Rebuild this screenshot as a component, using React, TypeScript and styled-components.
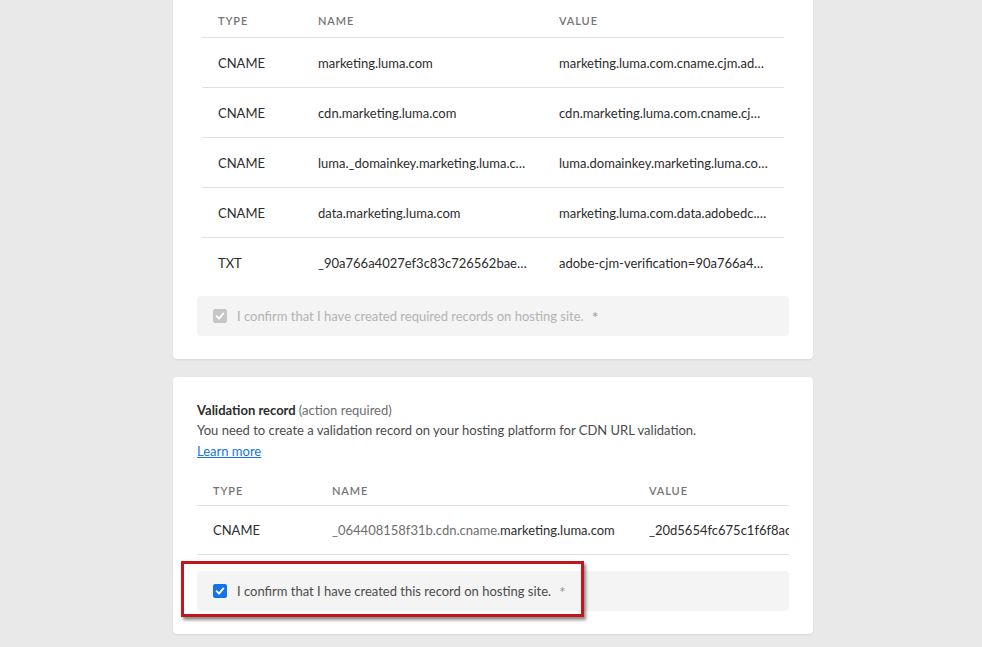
import React from "react";
import styled, { createGlobalStyle } from "styled-components";

const Global = createGlobalStyle`
  html, body { margin: 0; padding: 0; background: #e9e9e9; }
  body { font-family: Lato, "Open Sans", sans-serif; color: #2c2c2c; overflow: hidden; }
`;

const Page = styled.div`
  width: 982px;
  height: 647px;
  overflow: hidden;
  display: flex;
  flex-direction: column;
  align-items: flex-start;
  gap: 18px;
  padding-left: 173px;
  box-sizing: border-box;
`;

const Card = styled.section<{ $first?: boolean }>`
  width: 640px;
  box-sizing: border-box;
  background: #fff;
  border-radius: 4px;
  box-shadow: 0 1px 2px rgba(0, 0, 0, 0.08);
  display: flex;
  flex-direction: column;
  padding: ${(p) => (p.$first ? "0 24px 23px" : "23px 24px 23px")};
  margin-top: ${(p) => (p.$first ? "-6px" : "0")};
`;

const Table = styled.div<{ $inset?: boolean; $cols: string }>`
  display: grid;
  grid-template-columns: ${(p) => p.$cols};
  margin: ${(p) => (p.$inset ? "0 5px" : "0")};
  overflow: hidden;
`;

const HeadCell = styled.div`
  height: 44px;
  box-sizing: border-box;
  padding: 0 16px;
  padding-top: 9px;
  display: flex;
  align-items: center;
  font-size: 11px;
  font-weight: 600;
  letter-spacing: 0.9px;
  color: #747474;
  border-bottom: 1px solid #e1e1e1;
`;

const HeadCell2 = styled(HeadCell)`
  height: 34px;
  padding-top: 3px;
`;

const Cell = styled.div<{ $last?: boolean; $clip?: boolean; $h?: number }>`
  height: ${(p) => p.$h ?? 50}px;
  box-sizing: border-box;
  padding: 0 16px;
  display: flex;
  align-items: center;
  font-size: 13px;
  color: #2c2c2c;
  border-bottom: ${(p) => (p.$last ? "none" : "1px solid #e1e1e1")};
  white-space: nowrap;
  overflow: hidden;
  min-width: 0;
  ${(p) => (p.$clip ? "padding-right: 0;" : "")}
`;

const Ellipsis = styled.span`
  overflow: hidden;
  text-overflow: ellipsis;
  white-space: nowrap;
`;

const Faint = styled.span`
  color: #6e6e6e;
`;

const ConfirmBox = styled.div<{ $gap: number }>`
  position: relative;
  margin-top: ${(p) => p.$gap}px;
  height: 40px;
  background: #f4f4f4;
  border-radius: 4px;
  display: flex;
  align-items: center;
  padding-left: 16px;
  gap: 10px;
`;

const Check = styled.span<{ $on?: boolean }>`
  width: 14px;
  height: 14px;
  border-radius: 2px;
  background: ${(p) => (p.$on ? "#1473e6" : "#c6c6c6")};
  display: flex;
  align-items: center;
  justify-content: center;
  flex: none;
`;

const ConfirmText = styled.span<{ $on?: boolean }>`
  font-size: 13px;
  color: ${(p) => (p.$on ? "#4b4b4b" : "#b3b3b3")};
`;

const Star = styled.span`
  margin-left: 8px;
  color: #9a9a9a;
  font-size: 16px;
  vertical-align: -2px;
`;

const Highlight = styled.div`
  position: absolute;
  left: -16px;
  top: -10px;
  width: 403px;
  height: 56px;
  box-sizing: border-box;
  border: 3px solid #c3161c;
  box-shadow: 2px 3px 3px rgba(0, 0, 0, 0.45);
  pointer-events: none;
`;

const Title = styled.div`
  font-size: 13px;
  line-height: 20px;
  font-weight: 700;
  color: #2c2c2c;
`;

const Note = styled.span`
  font-weight: 400;
  color: #6e6e6e;
`;

const Desc = styled.div`
  font-size: 13px;
  line-height: 21px;
  color: #4b4b4b;
`;

const Link = styled.a`
  font-size: 13px;
  line-height: 20px;
  color: #1473e6;
  text-decoration: underline;
  align-self: flex-start;
  margin-bottom: 11px;
`;

const Tick = () => (
  <svg width="10" height="10" viewBox="0 0 10 10">
    <path d="M1.6 5.2 L4 7.6 L8.4 2.4" fill="none" stroke="#fff" strokeWidth="1.9" strokeLinecap="round" strokeLinejoin="round" />
  </svg>
);

const rows = [
  ["CNAME", "marketing.luma.com", "marketing.luma.com.cname.cjm.adobe.com"],
  ["CNAME", "cdn.marketing.luma.com", "cdn.marketing.luma.com.cname.cjm.adobe.com"],
  ["CNAME", "luma._domainkey.marketing.luma.com", "luma.domainkey.marketing.luma.com.adobe.com"],
  ["CNAME", "data.marketing.luma.com", "marketing.luma.com.data.adobedc.net"],
  ["TXT", "_90a766a4027ef3c83c726562bae1f0a9", "adobe-cjm-verification=90a766a4027ef3c8"],
];

export default function App() {
  return (
    <>
      <Global />
      <Page>
        <Card $first>
          <Table $inset $cols="100px 241px 241px">
            <HeadCell>TYPE</HeadCell>
            <HeadCell>NAME</HeadCell>
            <HeadCell>VALUE</HeadCell>
            {rows.map((r, i) => (
              <React.Fragment key={i}>
                <Cell $last={i === rows.length - 1}>{r[0]}</Cell>
                <Cell $last={i === rows.length - 1}><Ellipsis>{r[1]}</Ellipsis></Cell>
                <Cell $last={i === rows.length - 1}><Ellipsis>{r[2]}</Ellipsis></Cell>
              </React.Fragment>
            ))}
          </Table>
          <ConfirmBox $gap={8}>
            <Check><Tick /></Check>
            <ConfirmText>
              I confirm that I have created required records on hosting site.
              <Star>*</Star>
            </ConfirmText>
          </ConfirmBox>
        </Card>
        <Card>
          <Title>
            Validation record <Note>(action required)</Note>
          </Title>
          <Desc>You need to create a validation record on your hosting platform for CDN URL validation.</Desc>
          <Link href="#">Learn more</Link>
          <Table $cols="119px 317px 156px">
            <HeadCell2>TYPE</HeadCell2>
            <HeadCell2>NAME</HeadCell2>
            <HeadCell2>VALUE</HeadCell2>
            <Cell $h={49}>CNAME</Cell>
            <Cell $h={49}>
              <Faint>_064408158f31b.cdn.cname.</Faint>marketing.luma.com
            </Cell>
            <Cell $h={49} $clip>_20d5654fc675c1f6f8acac3e9b1</Cell>
          </Table>
          <ConfirmBox $gap={16}>
            <Check $on><Tick /></Check>
            <ConfirmText $on>
              I confirm that I have created this record on hosting site.
              <Star>*</Star>
            </ConfirmText>
            <Highlight />
          </ConfirmBox>
        </Card>
      </Page>
    </>
  );
}
